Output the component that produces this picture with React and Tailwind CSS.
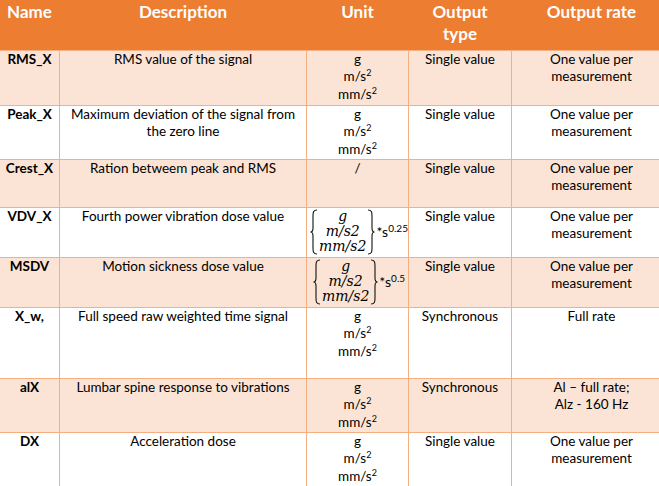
import React from 'react';

const Sup = ({ children }) => (
  <span className="relative -top-[5px] text-[9px] leading-none align-baseline">{children}</span>
);

const UNITS = (
  <>
    <div>g</div>
    <div>
      m/s<Sup>2</Sup>
    </div>
    <div>
      mm/s<Sup>2</Sup>
    </div>
  </>
);

function Brace({ flip }) {
  // tall curly brace spanning the three formula lines
  return (
    <svg width="8" height="46" viewBox="0 0 8 46" className={flip ? 'scale-x-[-1]' : ''}>
      <path
        d="M7 1 C3.5 1 3 3 3 7 L3 19 C3 22 2 23 0.5 23 C2 23 3 24 3 27 L3 39 C3 43 3.5 45 7 45"
        fill="none"
        stroke="#111"
        strokeWidth="1.1"
      />
    </svg>
  );
}

function Formula({ exp }) {
  return (
    <div className="flex items-center justify-center pl-[3px] pt-[1px]">
      <Brace />
      <div className="flex flex-col items-center italic text-[14px] leading-[15px] px-[1px] font-['DejaVu_Serif',serif]">
        <div>g</div>
        <div>m/s2</div>
        <div>mm/s2</div>
      </div>
      <Brace flip />
      <div className="text-[14px] ml-[1px]">
        *s<span className="relative -top-[5px] text-[10px] leading-none">{exp}</span>
      </div>
    </div>
  );
}

const ROWS = [
  { name: 'RMS_X', desc: 'RMS value of the signal', unit: UNITS, type: 'Single value', rate: ['One value per', 'measurement'], h: 'h-[55px]', pink: true },
  { name: 'Peak_X', desc: 'Maximum deviation of the signal from the zero line', unit: UNITS, type: 'Single value', rate: ['One value per', 'measurement'], h: 'h-[54px]' },
  { name: 'Crest_X', desc: 'Ration betweem peak and RMS', unit: <div>/</div>, type: 'Single value', rate: ['One value per', 'measurement'], h: 'h-[48px]', pink: true },
  { name: 'VDV_X', desc: 'Fourth power vibration dose value', unit: <Formula exp="0.25" />, type: 'Single value', rate: ['One value per', 'measurement'], h: 'h-[50px]' },
  { name: 'MSDV', desc: 'Motion sickness dose value', unit: <Formula exp="0.5" />, type: 'Single value', rate: ['One value per', 'measurement'], h: 'h-[50px]', pink: true },
  { name: 'X_w,', desc: 'Full speed raw weighted time signal', unit: UNITS, type: 'Synchronous', rate: ['Full rate'], h: 'h-[71px]' },
  { name: 'alX', desc: 'Lumbar spine response to vibrations', unit: UNITS, type: 'Synchronous', rate: ['Al \u2013 full rate;', 'Alz - 160 Hz'], h: 'h-[54px]', pink: true },
  { name: 'DX', desc: 'Acceleration dose', unit: UNITS, type: 'Single value', rate: ['One value per', 'measurement'], h: 'h-[60px]' },
];

export default function App() {
  const td = 'border border-[#f4b083] align-top text-center p-0';
  const th = 'align-top text-center pt-[1px] border-b border-[#f4b083]';
  return (
    <div className="w-[659px] h-[486px] overflow-hidden bg-white font-['Lato',sans-serif] text-[13.5px] leading-[17.5px] text-black">
      <table className="border-collapse table-fixed w-[672px] -ml-[1px]">
        <colgroup>
          <col className="w-[60px]" />
          <col className="w-[247px]" />
          <col className="w-[102px]" />
          <col className="w-[103px]" />
          <col className="w-[160px]" />
        </colgroup>
        <thead>
          <tr className="h-[50px] bg-[#ed7d31] text-white font-bold text-[17px] leading-[22px]">
            <th className={th}>Name</th>
            <th className={th}>Description</th>
            <th className={th}>Unit</th>
            <th className={th}>
              Output
              <br />
              type
            </th>
            <th className={th}>Output rate</th>
          </tr>
        </thead>
        <tbody>
          {ROWS.map((r) => (
            <tr key={r.name} className={`${r.h} ${r.pink ? 'bg-[#fbe4d5]' : 'bg-white'}`}>
              <td className={`${td} font-bold`}>{r.name}</td>
              <td className={td}>{r.desc}</td>
              <td className={td}>{r.unit}</td>
              <td className={td}>{r.type}</td>
              <td className={td}>
                {r.rate.map((l) => (
                  <div key={l}>{l}</div>
                ))}
              </td>
            </tr>
          ))}
        </tbody>
      </table>
    </div>
  );
}
